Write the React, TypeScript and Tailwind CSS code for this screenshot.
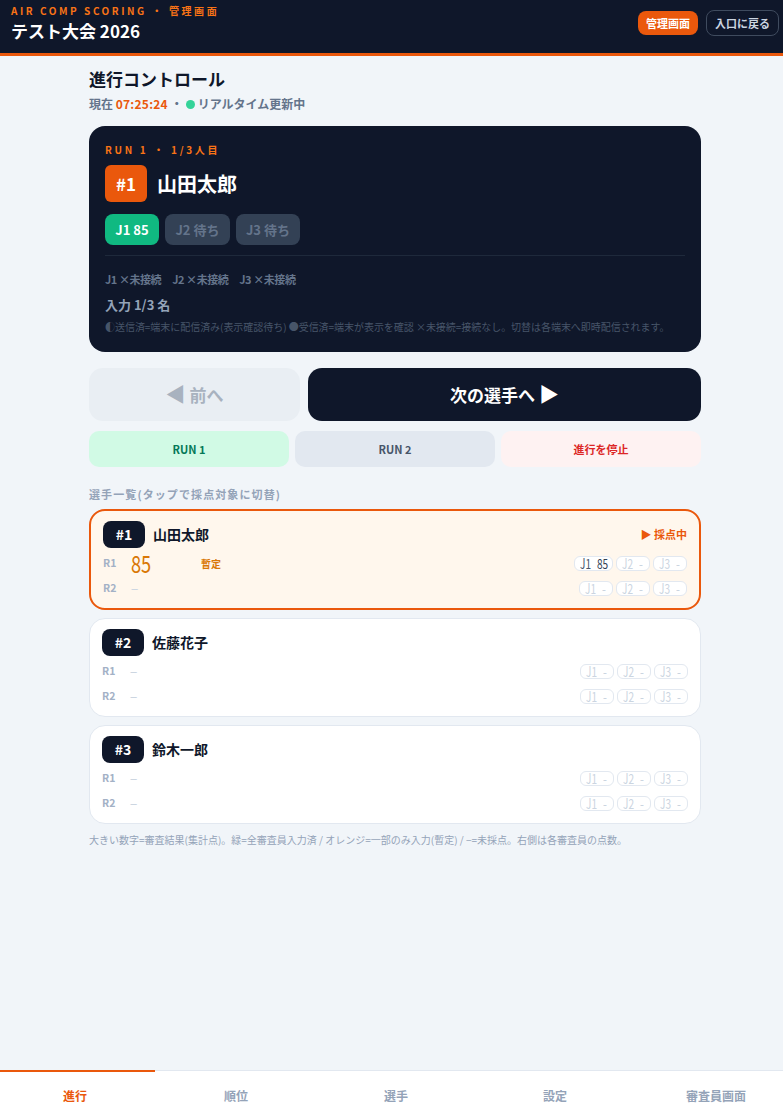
const sans = "font-['Noto_Sans_CJK_JP','Noto_Sans',sans-serif]";

function Chip({ j, v, on }: { j: string; v: string; on?: boolean }) {
  return (
    <span
      className={`flex h-[15px] items-center rounded-[6px] border border-[#e2e8f0] bg-white pl-[5px] text-[14px] leading-none font-normal ${
        on ? "w-[39px] text-[#475569]" : "w-[34px] text-[#cbd5e1]"
      }`}
    >
      <span className="inline-block w-[10px] origin-left scale-x-[0.72] whitespace-nowrap">{j}</span>
      <span
        className={
          on
            ? "ml-[7px] inline-block w-[10px] origin-left scale-x-[0.72] whitespace-nowrap text-[#334155]"
            : "ml-[7px] inline-block w-[5px] origin-left scale-x-[0.8] whitespace-nowrap"
        }
      >
        {v}
      </span>
    </span>
  );
}

function Row({ r, score, j1 }: { r: string; score?: string; j1?: string }) {
  return (
    <div className="flex h-[22px] items-center">
      <span className="w-[28px] text-[10.5px] font-bold text-[#a3b1c6]">{r}</span>
      <span className="flex w-[70px] items-center">
        {score ? (
          <span className="inline-block origin-left scale-x-[0.76] text-[24px] leading-none font-normal text-[#d97706]">
            {score}
          </span>
        ) : (
          <span className="text-[13px] leading-none text-[#cbd5e1]">−</span>
        )}
      </span>
      {score && <span className="text-[10px] font-bold text-[#d97706]">暫定</span>}
      <div className="ml-auto flex gap-[3px]">
        <Chip j="J1" v={j1 ?? "-"} on={!!j1} />
        <Chip j="J2" v="-" />
        <Chip j="J3" v="-" />
      </div>
    </div>
  );
}

function Player({ no, name, active }: { no: string; name: string; active?: boolean }) {
  return (
    <div
      className={`rounded-[16px] px-[12px] pt-[10px] pb-[9px] ${
        active ? "border-2 border-[#ea580c] bg-[#fff7ed]" : "border border-[#e2e8f0] bg-white"
      }`}
    >
      <div className="flex h-[27px] items-center">
        <span className="flex h-[27px] w-[42px] items-center justify-center rounded-[8px] bg-[#0f172a] text-[14px] font-bold text-white">
          {no}
        </span>
        <span className="ml-[8px] text-[14px] font-bold text-[#0f172a]">{name}</span>
        {active && <span className="ml-auto text-[11px] font-bold text-[#ea580c]">▶ 採点中</span>}
      </div>
      <div className="mt-[4px] flex flex-col gap-[3px]">
        <Row r="R1" score={active ? "85" : undefined} j1={active ? "85" : undefined} />
        <Row r="R2" />
      </div>
    </div>
  );
}

export default function App() {
  const tabs = [
    { t: "進行", w: "w-[155px] pr-[5px]", on: true },
    { t: "順位", w: "w-[162px]" },
    { t: "選手", w: "w-[158px]" },
    { t: "設定", w: "w-[160px]" },
    { t: "審査員画面", w: "w-[162px]" },
  ];
  return (
    <div className={`h-screen w-screen overflow-hidden bg-[#f1f5f9] ${sans}`}>
      <div className="flex h-[1116px] w-[790px] flex-col">
        <header className="flex h-[56px] items-start justify-between border-b-[3px] border-[#ea580c] bg-[#0f172a] pt-[5px] pr-[11px] pl-[11px]">
          <div>
            <div className="text-[10px] leading-[12px] font-bold tracking-[0.255em] text-[#f97316]">
              AIR COMP SCORING ・ 管理画面
            </div>
            <div className="mt-[2px] text-[17px] leading-[24px] font-bold text-white">テスト大会 2026</div>
          </div>
          <div className="mt-[5px] flex items-center gap-[8px]">
            <span className="flex h-[24px] w-[60px] items-center justify-center rounded-[8px] bg-[#ea580c] text-[11px] font-bold text-white">
              管理画面
            </span>
            <span className="flex h-[26px] w-[73px] items-center justify-center rounded-[8px] border border-[#3f4b5e] text-[11px] font-bold text-[#cbd5e1]">
              入口に戻る
            </span>
          </div>
        </header>

        <main className="mx-auto w-[612px] flex-1 pt-[11px]">
          <h1 className="text-[17px] leading-[24px] font-bold text-[#0f172a]">進行コントロール</h1>
          <p className="mt-[3px] flex h-[20px] items-center text-[12px] font-bold text-[#64748b]">
            現在&nbsp;<span className="tracking-[0.02em] text-[#ea580c]">07:25:24</span>&nbsp;・
            <span className="mx-[3px] inline-block h-[9px] w-[9px] rounded-full bg-[#34d399]" />
            リアルタイム更新中
          </p>

          <section className="mt-[12px] h-[226px] rounded-[16px] bg-[#0f172a] px-[16px] pt-[16px]">
            <div className="text-[10px] leading-[16px] font-bold tracking-[0.27em] text-[#f97316]">RUN 1 ・ 1/3人目</div>
            <div className="mt-[7px] flex items-center gap-[10px]">
              <span className="flex h-[37px] w-[42px] items-center justify-center rounded-[6px] bg-[#ea580c] text-[17px] font-bold text-white">
                #1
              </span>
              <span className="text-[20px] font-bold text-white">山田太郎</span>
            </div>
            <div className="mt-[12px] flex gap-[6px]">
              <span className="flex h-[31px] w-[54px] items-center justify-center rounded-[8px] bg-[#10b981] text-[13px] font-bold text-white">
                J1 85
              </span>
              <span className="flex h-[31px] w-[65px] items-center justify-center rounded-[8px] bg-[#334155] text-[13px] font-bold text-[#64748b]">
                J2 待ち
              </span>
              <span className="flex h-[31px] w-[64px] items-center justify-center rounded-[8px] bg-[#334155] text-[13px] font-bold text-[#64748b]">
                J3 待ち
              </span>
            </div>
            <div className="mt-[10px] border-t border-[#1e293b]" />
            <div className="mt-[15px] flex gap-[11px] text-[11px] leading-[16px] font-bold tracking-[-0.04em] text-[#64748b]">
              <span>J1 ×未接続</span>
              <span>J2 ×未接続</span>
              <span>J3 ×未接続</span>
            </div>
            <div className="mt-[8px] text-[13px] leading-[20px] font-bold text-[#94a3b8]">入力 1/3 名</div>
            <div className="mt-[5px] text-[10px] leading-[14px] tracking-[-0.04px] text-[#475569]">
              ◐送信済=端末に配信済み(表示確認待ち) ●受信済=端末が表示を確認 ×未接続=接続なし。切替は各端末へ即時配信されます。
            </div>
          </section>

          <div className="mt-[16px] flex gap-[8px]">
            <button className="h-[53px] w-[211px] rounded-[14px] bg-[#e9eef3] text-[17px] font-bold text-[#a8b2bf]">
              <span className="text-[20px] leading-none">◀</span> 前へ
            </button>
            <button className="h-[53px] flex-1 rounded-[14px] bg-[#0f172a] text-[17px] font-bold text-white">
              次の選手へ <span className="text-[20px] leading-none">▶</span>
            </button>
          </div>
          <div className="mt-[10px] grid grid-cols-3 gap-[6px]">
            <button className="h-[36px] rounded-[10px] bg-[#d1fae5] text-[11px] font-bold text-[#047857]">RUN 1</button>
            <button className="h-[36px] rounded-[10px] bg-[#e2e8f0] text-[11px] font-bold text-[#475569]">RUN 2</button>
            <button className="h-[36px] rounded-[10px] bg-[#fef2f2] text-[11px] font-bold text-[#dc2626]">進行を停止</button>
          </div>

          <div className="mt-[19px] text-[11px] leading-[16px] font-bold tracking-[0.1em] text-[#94a3b8]">
            選手一覧(タップで採点対象に切替)
          </div>
          <div className="mt-[7px] flex flex-col gap-[8px]">
            <Player no="#1" name="山田太郎" active />
            <Player no="#2" name="佐藤花子" />
            <Player no="#3" name="鈴木一郎" />
          </div>
          <p className="mt-[9px] text-[10px] leading-[14px] text-[#94a3b8]">
            大きい数字=審査結果(集計点)。緑=全審査員入力済 / オレンジ=一部のみ入力(暫定) / −=未採点。右側は各審査員の点数。
          </p>
        </main>

        <nav className="flex h-[46px] border-t border-[#e2e8f0] bg-white">
          {tabs.map((x) => (
            <span
              key={x.t}
              className={`relative flex shrink-0 items-center justify-center pt-[4px] text-[12px] font-bold ${x.w} ${
                x.on ? "text-[#ea580c]" : "text-[#94a3b8]"
              }`}
            >
              {x.on && <span className="absolute -top-px right-0 left-0 h-[2px] bg-[#ea580c]" />}
              {x.t}
            </span>
          ))}
        </nav>
      </div>
    </div>
  );
}
